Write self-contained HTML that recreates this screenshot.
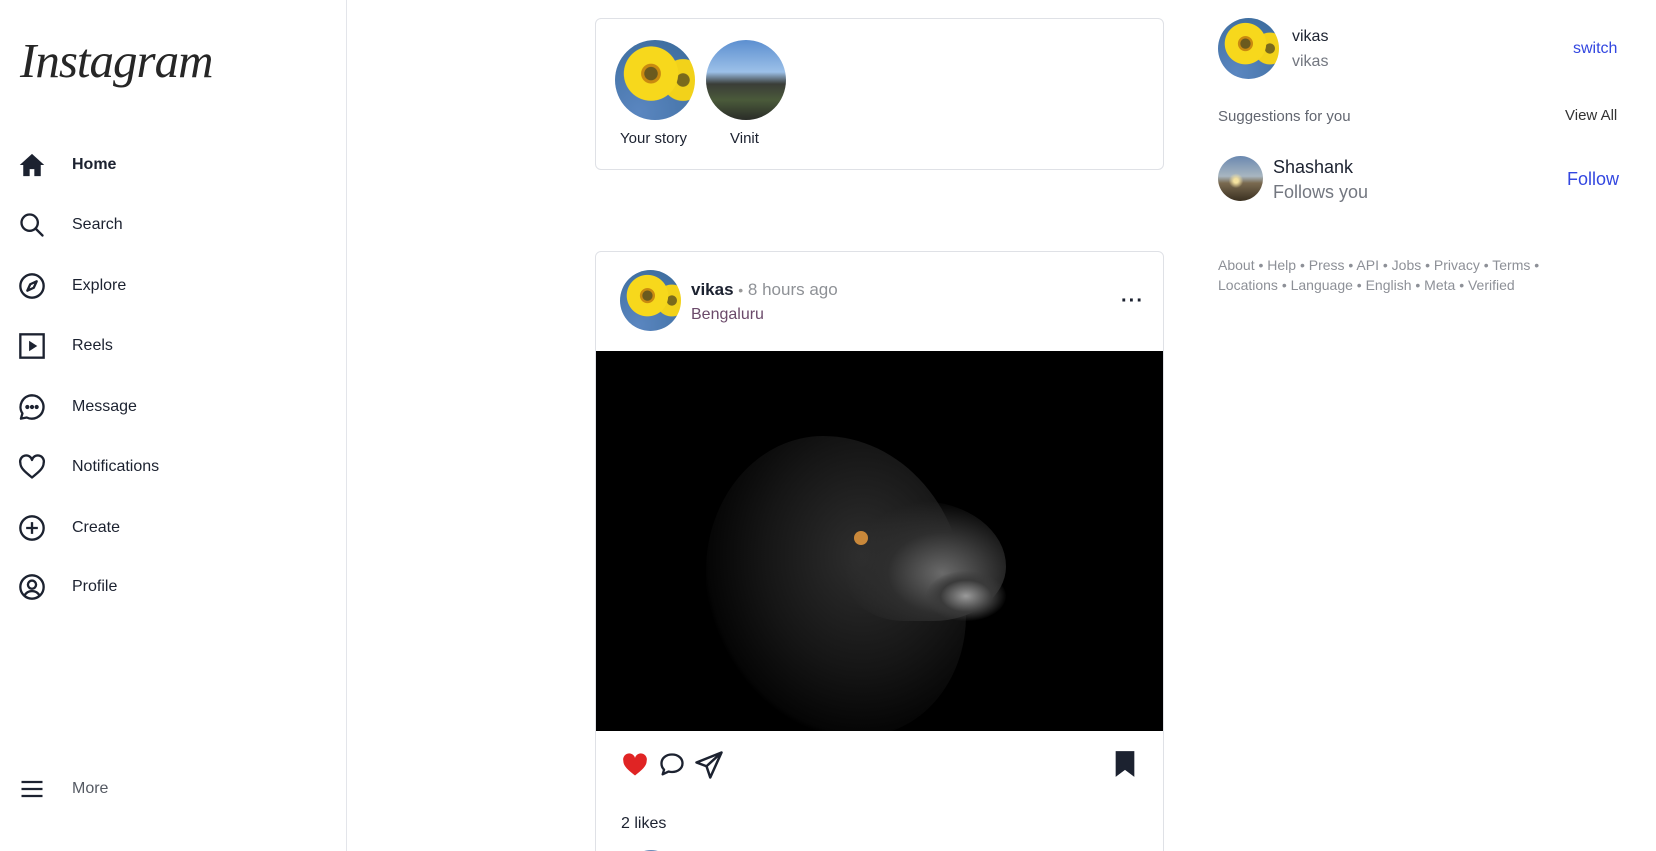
<!DOCTYPE html>
<html style="height:851px;overflow:hidden"><head><meta charset="utf-8"><style>
*{box-sizing:border-box;margin:0;padding:0}
html,body{width:1656px;height:851px;overflow:hidden}
body{background:#fff;font-family:"Liberation Sans",sans-serif;color:#1c2230;position:relative}
.side{position:absolute;left:0;top:0;width:347px;height:851px;border-right:1px solid #e3e5ea}
.logo{position:absolute;left:20px;top:32px;font-family:"Liberation Serif",serif;font-style:italic;font-size:49px;color:#262626;letter-spacing:-1px}
.nav{position:absolute;left:18px;height:30px;display:flex;align-items:center;font-size:16px}
.nav svg{width:28px;height:28px;margin-right:26px}
.abs{position:absolute}
.card{position:absolute;left:595px;width:569px;border:1px solid #dfe1e6;border-radius:6px;background:#fff}
.sun{background:radial-gradient(circle at 45% 42%,#6b5a1e 0 10%,#c98a10 11% 15%,#f7d81c 16% 42%,transparent 43%),radial-gradient(circle at 85% 50%,#7a6a1c 0 8%,#f2d21a 9% 26%,transparent 27%),radial-gradient(circle at 30% 90%,#5a86c0,#3a6a9a);border-radius:50%}
.temple{background:linear-gradient(#5c8fd0 0,#9cc0e8 40%,#3a3d38 55%,#4a5a3a 75%,#2a2c28 100%);border-radius:50%}
.mtn{background:radial-gradient(circle at 40% 55%,#f4e2a0 0 6%,transparent 20%),linear-gradient(#6a88b0 0,#a8b6c0 45%,#7a6a50 60%,#3a3020 100%);border-radius:50%}
.lbl{font-size:16px;color:#1c2230}
.grey{color:#737780}
</style></head><body>
<div class="side">
<div class="logo">Instagram</div>
<div class="nav" style="top:150px;font-weight:bold"><svg viewBox="0 0 24 24"><path d="M12 2.5L1.5 12H4.5V21.5H10V15.5H14V21.5H19.5V12H22.5Z" fill="#1c2230"/></svg>Home</div>
<div class="nav" style="top:210px"><svg viewBox="0 0 24 24" fill="none" stroke="#1c2230" stroke-width="2"><circle cx="10" cy="10" r="7"/><path d="M15 15l6 6" stroke-linecap="round"/></svg>Search</div>
<div class="nav" style="top:271px"><svg viewBox="0 0 24 24" fill="none" stroke="#1c2230" stroke-width="2"><circle cx="12" cy="12" r="10"/><path d="M16 8l-2.5 5.5L8 16l2.5-5.5z" stroke-linejoin="round"/></svg>Explore</div>
<div class="nav" style="top:331px"><svg viewBox="0 0 24 24" fill="none" stroke="#1c2230" stroke-width="2"><rect x="2" y="2" width="20" height="20"/><path d="M9.5 7.5v9l7-4.5z" fill="#1c2230" stroke="none"/></svg>Reels</div>
<div class="nav" style="top:392px"><svg viewBox="0 0 24 24" fill="none" stroke="#1c2230" stroke-width="2"><path d="M12 2a10 10 0 1 1-4.5 19L2.5 22l1.3-4.5A10 10 0 0 1 12 2z" stroke-linejoin="round"/><circle cx="8" cy="12" r=".8" fill="#1c2230"/><circle cx="12" cy="12" r=".8" fill="#1c2230"/><circle cx="16" cy="12" r=".8" fill="#1c2230"/></svg>Message</div>
<div class="nav" style="top:452px"><svg viewBox="0 0 24 24" fill="none" stroke="#1c2230" stroke-width="2"><path d="M12 21C5 15.5 2 12.5 2 8.5A5 5 0 0 1 12 6a5 5 0 0 1 10 2.5c0 4-3 7-10 12.5z" stroke-linejoin="round"/></svg>Notifications</div>
<div class="nav" style="top:513px"><svg viewBox="0 0 24 24" fill="none" stroke="#1c2230" stroke-width="2"><circle cx="12" cy="12" r="10"/><path d="M12 7v10M7 12h10"/></svg>Create</div>
<div class="nav" style="top:572px"><svg viewBox="0 0 24 24" fill="none" stroke="#1c2230" stroke-width="2"><circle cx="12" cy="12" r="10"/><circle cx="12" cy="10" r="3.5"/><path d="M5.5 19.5c1.5-3 4-4 6.5-4s5 1 6.5 4"/></svg>Profile</div>
<div class="nav grey" style="top:774px;color:#555a63"><svg viewBox="0 0 24 24" fill="none" stroke="#1c2230" stroke-width="2"><path d="M3 6h18M3 12h18M3 18h18"/></svg>More</div>
</div>

<div class="card" style="top:18px;height:152px">
<div class="abs sun" style="left:19px;top:21px;width:80px;height:80px"></div>
<div class="abs temple" style="left:110px;top:21px;width:80px;height:80px"></div>
<div class="abs lbl" style="left:24px;top:111px;font-size:15px">Your story</div>
<div class="abs lbl" style="left:134px;top:111px;font-size:15px">Vinit</div>
</div>

<div class="card" style="top:251px;height:620px">
<div class="abs sun" style="left:24px;top:18px;width:61px;height:61px"></div>
<div class="abs" style="left:95px;top:28px;font-size:17px;font-weight:bold;color:#1c2230">vikas <span style="color:#999;font-weight:normal;font-size:14px">•</span> <span style="color:#8e9196;font-weight:normal">8 hours ago</span></div>
<div class="abs" style="left:95px;top:54px;font-size:16px;color:#6b4a6a">Bengaluru</div>
<div class="abs" style="left:525px;top:38px;font-size:20px;font-weight:bold;letter-spacing:1px">···</div>
<div class="abs" style="left:0;top:99px;width:567px;height:380px;background:#000;overflow:hidden">
<div class="abs" style="left:110px;top:85px;width:260px;height:300px;border-radius:45% 55% 40% 50%;background:radial-gradient(ellipse at 60% 40%,#2e2e2e 0,#151515 45%,#050505 70%,transparent 72%)"></div>
<div class="abs" style="left:250px;top:150px;width:160px;height:120px;border-radius:30% 60% 50% 40%;background:radial-gradient(ellipse at 60% 60%,#6a6a6a 0,#2e2e2e 40%,transparent 72%)"></div>
<div class="abs" style="left:330px;top:220px;width:80px;height:50px;border-radius:50%;background:radial-gradient(ellipse at 50% 50%,#9a9a9a 0,#3a3a3a 45%,transparent 72%)"></div>
<div class="abs" style="left:258px;top:180px;width:14px;height:14px;border-radius:50%;background:#c9883a"></div>
</div>
<svg class="abs" style="left:25px;top:499px" width="28" height="28" viewBox="0 0 24 24"><path d="M12 21C5 15.5 2 12.5 2 8.5A5 5 0 0 1 12 6a5 5 0 0 1 10 2.5c0 4-3 7-10 12.5z" fill="#e02424"/></svg>
<svg class="abs" style="left:62px;top:499px" width="28" height="28" viewBox="0 0 24 24" fill="none" stroke="#1c2230" stroke-width="2"><path d="M12 3c5 0 9 3 9 7.5S17 18 12 18c-1 0-2-.1-3-.4L4 20l1.2-4A7.2 7.2 0 0 1 3 10.5C3 6 7 3 12 3z" stroke-linejoin="round"/></svg>
<svg class="abs" style="left:98px;top:498px" width="30" height="30" viewBox="0 0 24 24" fill="none" stroke="#1c2230" stroke-width="2" stroke-linejoin="round"><path d="M22 2L2 10l8 3 3 9z M10 13l12-11"/></svg>
<svg class="abs" style="left:517px;top:498px" width="24" height="28" viewBox="0 0 20 24"><path d="M2 1h16v22l-8-6-8 6z" fill="#1c2230"/></svg>
<div class="abs lbl" style="left:25px;top:563px">2 likes</div>
<div class="abs" style="left:30px;top:598px;width:50px;height:50px;border-radius:50%;background:#6a8ab8"></div>
</div>

<div class="abs sun" style="left:1218px;top:18px;width:61px;height:61px"></div>
<div class="abs" style="left:1292px;top:28px;font-size:16px">vikas</div>
<div class="abs grey" style="left:1292px;top:53px;font-size:16px">vikas</div>
<div class="abs" style="left:1573px;top:40px;font-size:16px;color:#3347e0">switch</div>
<div class="abs grey" style="left:1218px;top:108px;font-size:15px;color:#626670">Suggestions for you</div>
<div class="abs" style="left:1565px;top:107px;font-size:15px;color:#333">View All</div>
<div class="abs mtn" style="left:1218px;top:156px;width:45px;height:45px"></div>
<div class="abs" style="left:1273px;top:157px;font-size:18px;color:#1c2230">Shashank</div>
<div class="abs grey" style="left:1273px;top:182px;font-size:18px">Follows you</div>
<div class="abs" style="left:1567px;top:169px;font-size:18px;color:#3347e0">Follow</div>
<div class="abs" style="left:1218px;top:255px;font-size:14px;color:#8d9097;line-height:20px">About • Help • Press • API • Jobs • Privacy • Terms •<br>Locations • Language • English • Meta • Verified</div>
</body></html>
